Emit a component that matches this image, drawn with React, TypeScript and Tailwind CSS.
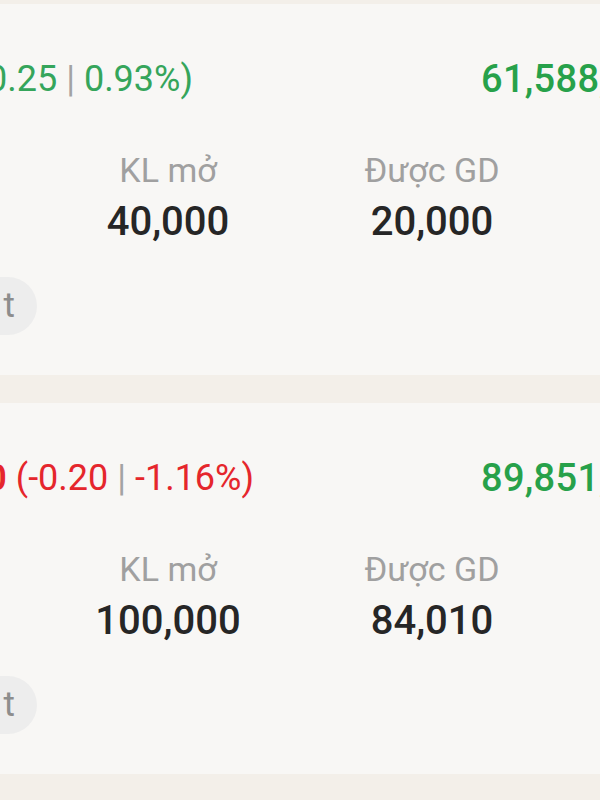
import React from "react";

type CardProps = {
  prefix: React.ReactNode;
  price: string;
  kl: string;
  dgd: string;
  negative?: boolean;
};

function Card({ prefix, price, kl, dgd, negative }: CardProps) {
  return (
    <div className="h-[371px] shrink-0 bg-[#f8f7f5] pt-[45px] overflow-hidden">
      <div className="grid grid-cols-[481px_auto] h-[60px] items-center">
        <div
          className={
            "flex justify-end whitespace-nowrap text-[36px] leading-[60px] " +
            (negative ? "pr-[227px] text-[#e5262c]" : "pr-[288px] text-[#35a55b]")
          }
        >
          {prefix}
        </div>
        <div className="whitespace-nowrap text-[38px] font-medium leading-[60px] text-[#27a14a] tracking-[0.3px]">
          {price}
        </div>
      </div>
      <div className="pl-[36px] grid grid-cols-[264px_264px] mt-[41px]">
        <div className="text-center text-[34px] leading-[40px] text-[#a0a0a0]">KL mở</div>
        <div className="text-center text-[34px] leading-[40px] text-[#a0a0a0]">Được GD</div>
        <div className="mt-[10px] text-center text-[40px] leading-[44px] font-medium text-[#262626]">{kl}</div>
        <div className="mt-[10px] text-center text-[40px] leading-[44px] font-medium text-[#262626]">{dgd}</div>
      </div>
      <div className="mt-[33px] w-[37px] flex justify-end">
        <div className="shrink-0 h-[58px] rounded-full bg-[#ededed] pl-[24px] pr-[22px] flex items-center whitespace-nowrap text-[35px] text-[#8d8d8d]">
          <span>Chi tiế</span>
          <span className="ml-[12px]">t</span>
        </div>
      </div>
    </div>
  );
}

export default function App() {
  return (
    <div
      className="w-[600px] h-[800px] overflow-hidden bg-[#f3efe9] flex flex-col pt-[4px] gap-[28px]"
      style={{ fontFamily: "Roboto, 'Noto Sans', sans-serif" }}
    >
      <Card
        negative={false}
        prefix={
          <span>
            <span className="font-semibold">27.10</span> (+0.25 <span className="text-[#a3a3a3]">|</span> 0.93%)
          </span>
        }
        price="61,588,000"
        kl="40,000"
        dgd="20,000"
      />
      <Card
        negative
        prefix={
          <span>
            <span className="font-semibold">17.00</span> (-0.20 <span className="text-[#a3a3a3]">|</span> -1.16%)
          </span>
        }
        price="89,851,000"
        kl="100,000"
        dgd="84,010"
      />
      <div className="h-[40px] shrink-0 bg-[#f9ebe9]" />
    </div>
  );
}
